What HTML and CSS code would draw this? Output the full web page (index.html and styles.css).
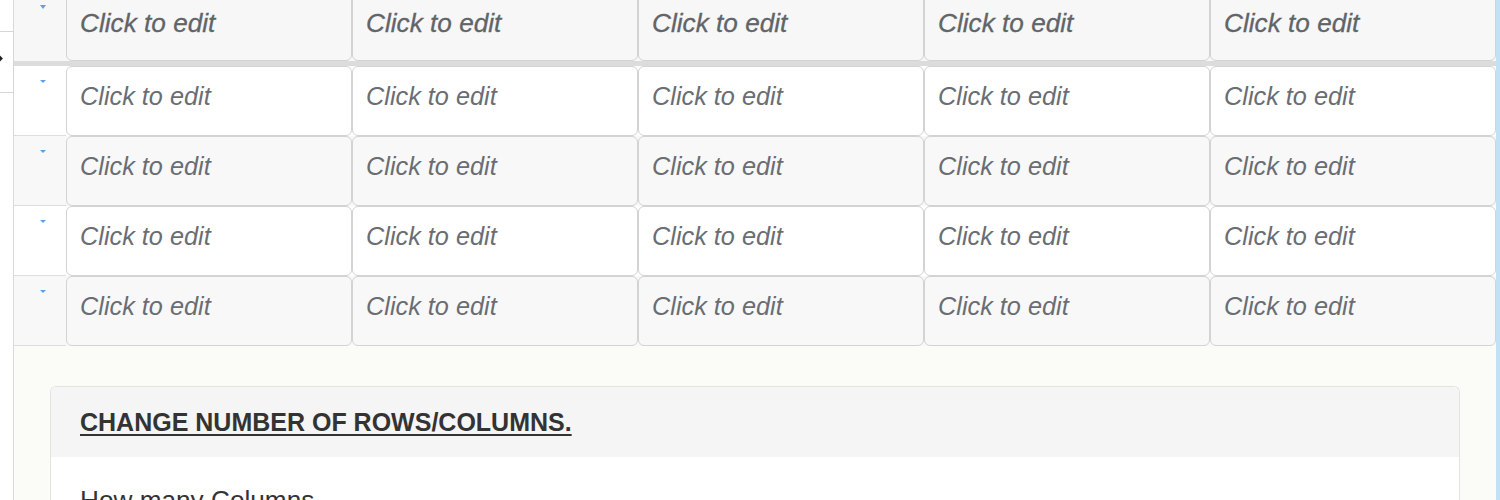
FILE: index.html
```html
<!DOCTYPE html>
<html lang="en">
<head>
<meta charset="utf-8">
<title>Table editor</title>
<link rel="stylesheet" href="styles.css">
</head>
<body>
<div class="page">
  <div class="main">
    <div class="grid">
      <div class="row head">
        <div class="handle"><span class="caret"></span></div>
        <div class="cell">Click to edit</div>
        <div class="cell">Click to edit</div>
        <div class="cell">Click to edit</div>
        <div class="cell">Click to edit</div>
        <div class="cell">Click to edit</div>
      </div>
      <div class="sep"></div>
      <div class="row">
        <div class="handle"><span class="caret"></span></div>
        <div class="cell">Click to edit</div>
        <div class="cell">Click to edit</div>
        <div class="cell">Click to edit</div>
        <div class="cell">Click to edit</div>
        <div class="cell">Click to edit</div>
      </div>
      <div class="row alt">
        <div class="handle"><span class="caret"></span></div>
        <div class="cell">Click to edit</div>
        <div class="cell">Click to edit</div>
        <div class="cell">Click to edit</div>
        <div class="cell">Click to edit</div>
        <div class="cell">Click to edit</div>
      </div>
      <div class="row">
        <div class="handle"><span class="caret"></span></div>
        <div class="cell">Click to edit</div>
        <div class="cell">Click to edit</div>
        <div class="cell">Click to edit</div>
        <div class="cell">Click to edit</div>
        <div class="cell">Click to edit</div>
      </div>
      <div class="row alt">
        <div class="handle"><span class="caret"></span></div>
        <div class="cell">Click to edit</div>
        <div class="cell">Click to edit</div>
        <div class="cell">Click to edit</div>
        <div class="cell">Click to edit</div>
        <div class="cell">Click to edit</div>
      </div>
    </div>
    <div class="settings">
      <div class="panel">
        <div class="panel-head"><h2 class="panel-title">CHANGE NUMBER OF ROWS/COLUMNS.</h2></div>
        <div class="panel-body">
          <p class="label">How many Columns</p>
        </div>
      </div>
    </div>
  </div>
  <div class="strip"></div>
  <div class="tab">
    <svg width="14" height="62" viewBox="0 0 14 62"><path d="M-3 23 L1.5 27.5 L-3 32" fill="none" stroke="#222" stroke-width="2"/></svg>
  </div>
</div>
</body>
</html>
```
FILE: styles.css
```css
html, body {
  margin: 0;
  padding: 0;
  overflow: hidden;
  background: #ffffff;
}
body {
  font-family: "Liberation Sans", Arial, Helvetica, sans-serif;
  color: #333333;
}
.page {
  position: relative;
  display: flex;
  align-items: stretch;
  min-height: 500px;
}
.main {
  margin-left: 13px;
  width: 1482px;
  border-left: 1px solid #d9d9d9;
  display: flex;
  flex-direction: column;
}
.strip {
  width: 4px;
  background: #c3e1f5;
}
.grid {
  margin-top: -7px;
  display: flex;
  flex-direction: column;
}
.row {
  display: grid;
  grid-template-columns: 52px repeat(5, 1fr);
  height: 70px;
  background: #ffffff;
}
.row.alt {
  background: #f8f8f8;
}
.row.head {
  height: 68px;
  background: #f7f7f7;
}
.sep {
  height: 5px;
  background: #dcdcdc;
}
.handle {
  box-sizing: border-box;
  border-bottom: 1px solid #dddddd;
  padding: 14px 0 0 26px;
}
.row.head .handle {
  border-bottom: none;
  padding-top: 12px;
}
.caret {
  display: block;
  width: 0;
  height: 0;
  border-left: 3px solid transparent;
  border-right: 3px solid transparent;
  border-top: 3px solid #5e9fe6;
}
.row.head .caret {
  border-left-width: 3.5px;
  border-right-width: 3.5px;
  border-top-width: 4px;
}
.cell {
  box-sizing: border-box;
  border: 1px solid #d3d3d3;
  border-radius: 6px;
  padding: 14px 13px 0;
  font-size: 25.3px;
  line-height: 30px;
  font-style: italic;
  color: #6a6d72;
  white-space: nowrap;
}
.row.head .cell {
  font-size: 26.2px;
  color: #616468;
  -webkit-text-stroke: 0.3px #616468;
}
.settings {
  flex: 1;
  background: #fbfbf8;
  padding: 40px 36px 0;
}
.panel {
  border: 1px solid #e3e3e3;
  border-bottom: none;
  border-radius: 6px 6px 0 0;
  background: #ffffff;
}
.panel-head {
  background: #f5f5f5;
  padding: 21px 29px;
  border-radius: 6px 6px 0 0;
}
.panel-title {
  margin: 0;
  font-size: 25px;
  line-height: 28px;
  font-weight: bold;
  color: #333333;
  text-decoration: underline;
  text-decoration-thickness: 2px;
  text-underline-offset: 3px;
}
.panel-body {
  padding: 28px 29px 40px;
}
.label {
  margin: 0;
  font-size: 26.2px;
  line-height: 30px;
  color: #333333;
}
.tab {
  position: absolute;
  left: 0;
  top: 31px;
  width: 13px;
  height: 60px;
  background: #ffffff;
  border: 1px solid #d6d6d6;
  border-left: none;
  overflow: hidden;
}
.tab svg {
  display: block;
  margin-top: -1px;
}
```
